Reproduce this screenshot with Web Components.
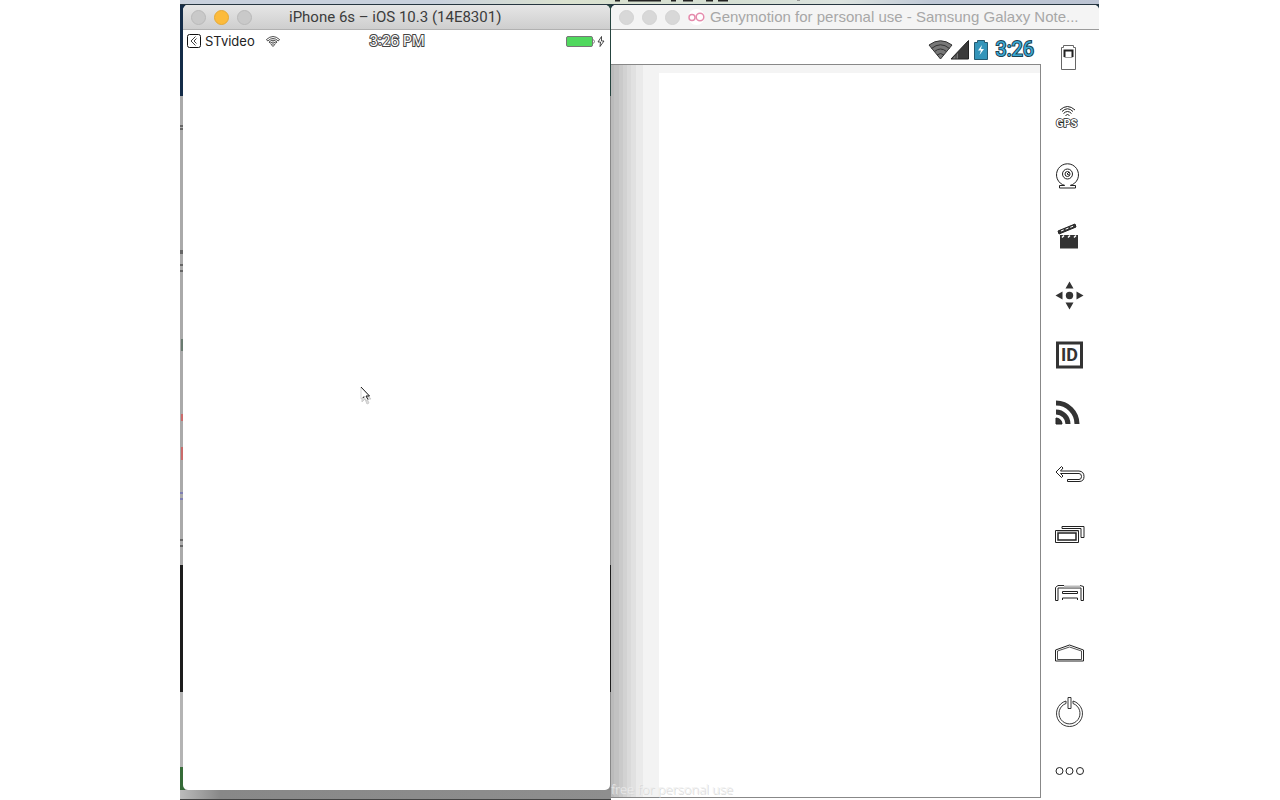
<!DOCTYPE html>
<html lang="en"><head><meta charset="utf-8"><title>Device simulators</title>
<style>body{margin:0;background:#fff;font-family:Inter,"Liberation Sans",sans-serif}</style></head>
<body>
<desktop-scene>
  <phone-window slot="phone"></phone-window>
  <android-window slot="android"></android-window>
</desktop-scene>
<script>
class Base extends HTMLElement{
  connectedCallback(){ if(!this.shadowRoot) this.attachShadow({mode:'open'}).innerHTML=this.render(); }
}
customElements.define('desktop-scene',class extends Base{render(){return `
<style>
:host{display:flex;justify-content:center;height:100vh;min-height:600px;overflow:hidden}
main{flex:1;max-width:919px;margin-left:-1px;display:grid;grid-template-columns:431fr 488fr;grid-template-rows:5px minmax(0,1fr);position:relative}
.top{grid-column:1/3;border-bottom:1px solid #273640;background:linear-gradient(90deg,#c9d1dd 0,#c9d1dd 28%,#dbe2d0 42%,#d5dfd3 60%,#dce3df 72%,#bfc8d6 82%,#bcc4d3 100%)}
.top svg{display:block;width:100%;height:4px}
.left{padding:0 1px 9px 3px;display:grid;background:
 linear-gradient(90deg,#bbb,#888 40px,#8e8e8e) 0 100%/100% 9px no-repeat,
 linear-gradient(#142c48 0 11.5%,#aaa 11.5% 70.5%,#1c1c1c 70.5% 86.5%,#b4b4b4 86.5% 96%,#356b38 96%) 0 0/5px 100% no-repeat,
 linear-gradient(#26443f 0 11.5%,#888 11.5% 70.5%,#1c1c1c 70.5% 86.5%,#888 86.5%) 100% 0/5px 100% no-repeat,#8d8d8d;border-bottom:1px solid #444;box-sizing:border-box}
.right{display:grid;min-width:0;background:linear-gradient(#1d3340 10px,#888 10px)}
.marks{position:absolute;left:0;top:97px;width:3px;height:480px}
</style>
<main><div class="top"><svg viewBox="0 0 919 4" preserveAspectRatio="none" aria-hidden="true"><path d="M435 0h5M448 0h33M491 0h5M503 0h10M526 0h7M538 0h10" stroke="#222" stroke-width="3"/><path d="M617 0h3" stroke="#999" stroke-width="2"/></svg></div>
<div class="left"><slot name="phone"></slot></div><div class="right"><slot name="android"></slot></div>
<svg class="marks" viewBox="0 0 3 480" aria-hidden="true"><path d="M0 29h3M0 32h3M0 154h3M0 156h3M0 168h3M0 174h3M0 443h3M0 449h3" stroke="#222"/><path d="M2 242v12" stroke="#697a70" stroke-width="2"/><path d="M2 317v7M2 350v13" stroke="#cb6b6b" stroke-width="2"/><path d="M0 396h3M0 402h3" stroke="#55b"/></svg>
</main>`}});

customElements.define('window-bar',class extends Base{render(){return `
<style>
:host{display:flex;align-items:center;height:24px;padding:0 8px;border-bottom:1px solid var(--line,#b1b1b1);background:var(--bar);border-radius:5px 5px 0 0;color:var(--ink)}
.lights{display:flex;gap:8px;flex:none}
button{width:15px;height:15px;padding:0;border-radius:50%;border:1px solid var(--dot-line);background:var(--dot)}
.min{background:var(--mid,var(--dot));border-color:var(--mid-line,var(--dot-line))}
.title{flex:1;min-width:0;white-space:nowrap;overflow:hidden;text-overflow:ellipsis}
</style><div class="lights"><button aria-label="Close"></button><button class="min" aria-label="Minimize"></button><button aria-label="Zoom"></button></div><div class="title"><slot></slot></div>`}});

customElements.define('phone-window',class extends Base{render(){return `
<style>
:host{display:flex;flex-direction:column;min-width:0;background:#fff;border-radius:5px;overflow:hidden;position:relative}
window-bar{--bar:linear-gradient(#e6e6e6,#cecece);--ink:#3c3c3c;--dot:#c9c9c9;--dot-line:#b9b9b9;--mid:#fcbb3c;--mid-line:#e5a936}
h1{margin:0;padding:0 37px;font:400 15px/24px Roboto,sans-serif}
.status{display:grid;grid-template-columns:1fr auto 1fr;align-items:center;height:22px;padding:0 5px 0 4px;font:13px/22px Inter,sans-serif;color:#222}
.back,.power{display:flex;align-items:center}.back{gap:4px}.power{justify-content:flex-end}
a{color:inherit;text-decoration:none;display:flex;align-items:center;gap:4px}
svg{display:block;flex:none}
.wifi{margin-left:7px}
time{color:#fff;font:14px/22px Inter,sans-serif;-webkit-text-stroke:2px #444;paint-order:stroke fill;padding-left:2px}
.cursor{position:absolute;left:177px;top:381px}
</style>
<window-bar><h1>iPhone 6s – iOS 10.3 (14E8301)</h1></window-bar>
<div class="status"><div class="back"><a href="#"><svg width="14" height="14" viewBox="0 0 14 14" fill="none" stroke="#111" aria-hidden="true"><rect x=".5" y=".5" width="13" height="13" rx="2"/><path d="M8.5 2.5 4 7l4.5 4.5M9.500 4.500 7 7l2.500 2.500" stroke-width=".8"/></svg>STvideo</a>
<svg class="wifi" width="14" height="11" viewBox="0 0 14 11" fill="none" stroke="#222" stroke-width=".8" aria-hidden="true"><path d="M.5 3.500Q7-2.500 13.500 3.500L12.300 5Q7 0 1.700 5ZM3 6Q7 2.500 11 6L10 7.200Q7 4.700 4 7.200ZM5.200 8.500Q7 7 8.800 8.500L7 10.500Z"/></svg></div>
<time>3:26 PM</time>
<div class="power"><svg width="39" height="13" viewBox="0 0 39 13" aria-hidden="true"><rect x=".5" y="1.500" width="26" height="10" rx="1.500" fill="#50d85e" stroke="#777"/><path d="M27.500 4.500q2 2 0 4" fill="none" stroke="#777"/><path d="M35.500 1.500 32 7h2.500L34 11.500 38 6H35.500Z" fill="#fff" stroke="#222" stroke-width=".8"/></svg></div></div>
<svg class="cursor" width="13" height="20" viewBox="0 0 13 20" aria-hidden="true"><path d="M2 3v13l3-3 2 5 2-1-2-4h4Z" fill="#ddd" stroke="#ccc"/><path d="M1 1v12l3-2.500 2 4 2-1-2-3.500h3.500Z" fill="#fff" stroke="#bbb" stroke-width=".6"/><path d="M1 1 9.500 10H6l2 3.500M4 10.500 3 12" fill="none" stroke="#222"/></svg>`}});

const ICONS=[
['Battery','<path d="M6.500 27.500v-22h2v-2h10v2h2v22Z" stroke="#666"/><path d="M9.500 15V8.500h8V15" stroke-width="2"/><path d="M9.500 15.500h8" stroke="#999"/>'],
['GPS','<path d="M5 8Q12.500 1 20 8M7 9.500Q12.500 4 18 9.500M8.500 11.500Q12.500 7.500 16.500 11.500M10.500 13.500Q12.500 11.500 14.500 13.500"/><text x="1" y="25" font-size="11" font-weight="700" fill="#fff" stroke="#222" stroke-width="1.500" paint-order="stroke">GPS</text>'],
['Camera','<path d="M10 24.500a11 11 0 1 1 5 0"/><circle cx="12.500" cy="13" r="5"/><circle cx="12.500" cy="13" r="2.500"/><path d="M14 11l-2 2 2 1M9 24.500H4.500V27h16v-2.500H16"/>'],
['Screencast','<path d="M5 14h18v13.500H5Z" fill="#333" stroke="none"/><path d="m4 13 17-7-1-3L3 10Z" fill="#333"/><path d="m6 10 14-5.500" stroke="#fff" stroke-dasharray="3 2"/><path d="M7 16.500l2-2M13 16.500l2-2M19 16.500l2-2" stroke="#fff" stroke-width="1.500"/>'],
['Move','<g fill="#333" stroke="none"><circle cx="14.500" cy="15.500" r="3.700"/><path d="M10.500 8.500h8l-4-7ZM10.500 22.500h8l-4 7ZM7.500 11.500v8L.5 15.500ZM21.500 11.500v8l7-4Z"/></g>'],
['Identifiers','<rect x="2.500" y="3" width="24" height="24" stroke="#333" stroke-width="3"/><text x="6" y="21" font-size="18" font-weight="700" fill="#333" stroke="none">ID</text>'],
['Network','<path d="M1 4a21 21 0 0 1 21 21M1 13a12 12 0 0 1 12 12" stroke="#333" stroke-width="5"/><path d="M1 19a6 6 0 0 1 6 6H1Z" fill="#333"/>'],
['Back','<path d="M6.500 7.500 1 13l5.500 5.500 1.500-1.500-2.500-2.500H24q2.500 0 2.500 3t-2.500 3H12.500v2H24q5 0 5-5t-5-5.500H5.500L8 9Z"/>'],
['Recent apps','<path d="M.5 12.500h23v12H.5Z"/><path d="M3 15h18v7H3Z" stroke-width="1.500"/><path d="M7 10.500v-2h22v11h-3v-9Z"/><path d="M2 13.500h21" stroke="#bbb"/>'],
['Menu','<path d="M3 22.500H.5v-13L3 7.500h6M25 7.500l3.500 1v14H26V10H3v12.500"/><path d="M9 8.500h16" stroke="#bbb" stroke-width="2"/><path d="M7.500 13.500h15v2h-15ZM7.500 22v-2h15v2"/>'],
['Home','<path d="M.5 24V13L14.500 8l14 5v11Z"/><path d="M2.500 22.500V14l12-4 12 4v8.500Z" stroke-width=".8"/>'],
['Power','<path d="M11 4a13 13 0 1 0 7 0M11 6.500a10.500 10.500 0 1 0 7 0M11 4v2.500M18 4v2.500M13 .5h3v11h-3Z" stroke-width=".9"/>'],
['More','<circle cx="4.500" cy="15" r="3.500"/><circle cx="14.500" cy="15" r="3.500"/><circle cx="25" cy="15" r="3.500"/>']];
customElements.define('tool-rail',class extends Base{render(){return `
<style>:host{display:flex;flex-direction:column;justify-content:space-between;box-sizing:border-box;padding:12px 14px 14px;background:#fff}
button{display:block;width:30px;height:30px;padding:0;border:0;background:none}
svg{display:block;overflow:visible;font-family:Roboto,sans-serif}</style>
${ICONS.map(([n,d])=>`<button aria-label="${n}"><svg width="30" height="30" viewBox="0 0 30 30" fill="none" stroke="#222" aria-hidden="true">${d}</svg></button>`).join('')}`}});

customElements.define('android-window',class extends Base{render(){return `
<style>
:host{display:flex;flex-direction:column;min-width:0;min-height:0;background:#fff;border-radius:5px 5px 0 0}
window-bar{--bar:#f4f4f4;--ink:#a7a7a7;--dot:#d8d8d8;--dot-line:#d3d3d3;--line:#9b9b9b}
.name{display:flex;align-items:center;gap:5px;padding-left:8px}
h1{margin:0;font:400 15px/24px "Liberation Sans",sans-serif;white-space:nowrap}
svg{display:block;flex:none}
.body{flex:1;display:grid;grid-template-columns:minmax(0,1fr) 58px;min-height:0}
.device{display:flex;flex-direction:column;padding-bottom:2px}
.status{display:flex;align-items:center;justify-content:flex-end;gap:4px;height:34px;padding:5px 7px 0 0;box-sizing:border-box}
time{font:400 20px/29px Roboto,sans-serif;color:#3ba9d4;-webkit-text-stroke:2px #1d4252;paint-order:stroke fill;margin-left:3px}
.screen{flex:1;display:flex;align-items:flex-end;border:1px solid #888;border-left:0;background:
 linear-gradient(#f4f4f4,#f4f4f4) 0 0/100% 8px no-repeat,
 linear-gradient(90deg,#bbb 0 3px,#c2c2c2 3px 8px,#cacaca 8px 12px,#d2d2d2 12px 16px,#dadada 16px 20px,#e1e1e1 20px 25px,#eaeaea 25px 32px,#f3f3f3 32px 48px,#fff 48px);background-blend-mode:darken}
p{margin:0;font:300 13px/16px "Open Sans",sans-serif;color:#eee;text-shadow:1px 1px #d6d6d6}
</style>
<window-bar><div class="name"><svg width="17" height="16" viewBox="0 0 17 16" aria-hidden="true"><circle cx="8.500" cy="8" r="8" fill="#fff"/><g fill="none" stroke="#e58cad" stroke-width="1.500"><circle cx="4" cy="8.500" r="3"/><circle cx="12" cy="8" r="3.800"/></g></svg><h1>Genymotion for personal use - Samsung Galaxy Note...</h1></div></window-bar>
<div class="body"><div class="device"><div class="status">
<svg width="42" height="20" viewBox="0 0 42 20" aria-hidden="true"><path d="M1 5Q12.500-3.500 24 5L12.500 19Z" fill="#777" stroke="#333"/><path d="M3.500 8.500Q12.500 1 21.500 8.500M6.500 11.500Q12.500 6.500 18.500 11.500M9 15Q12.500 12 16 15" fill="none" stroke="#333"/><path d="M23 19 40.500.5V19Z" fill="#3a3a3a" stroke="#222"/><path d="M24.500 18.500 30 13v5.500Z" fill="#777"/><path d="M28 14v5" stroke="#333"/></svg>
<svg width="14" height="20" viewBox="0 0 14 20" aria-hidden="true"><path d="M.5 2.500h3v-2h7v2h3v17H.5Z" fill="#3495ba" stroke="#245a70"/><path d="M8 5 4 10.500h3L5.500 15 10 9H7Z" fill="#fff"/></svg>
<time>3:26</time></div><div class="screen"><p>free for personal use</p></div></div><tool-rail></tool-rail></div>`}});
</script></body></html>
